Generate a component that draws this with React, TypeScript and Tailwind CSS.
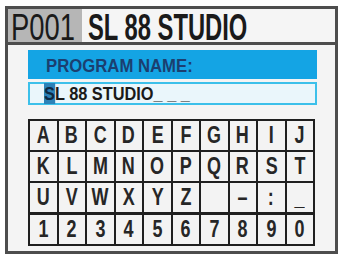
import React from "react";

const rows1 = [
  ["A", "B", "C", "D", "E", "F", "G", "H", "I", "J"],
  ["K", "L", "M", "N", "O", "P", "Q", "R", "S", "T"],
  ["U", "V", "W", "X", "Y", "Z", "", "–", ":", "_"],
];
const rows2 = ["1", "2", "3", "4", "5", "6", "7", "8", "9", "0"];

function Cell({ ch }: { ch: string }) {
  return (
    <div className="bg-[#f3f3f3] flex items-center justify-center h-[29px]">
      <span className="inline-block scale-x-[0.78] text-[23px] font-bold text-[#262626] leading-[29px]">
        {ch}
      </span>
    </div>
  );
}

export default function App() {
  return (
    <div
      className="w-[340px] h-[257px] bg-white pt-[6px] pl-[5px]"
      style={{ fontFamily: '"Liberation Sans", Arial, sans-serif' }}
    >
      <div className="w-[333px] h-[248px] border-[3px] border-[#4d4d4d] flex flex-col bg-[#f4f4f4]">
        {/* header */}
        <div className="flex h-[36px] border-b-[3px] border-[#4d4d4d] shrink-0">
          <div className="w-[74px] bg-[#b6b6b6] flex items-center pl-[3px]">
            <span className="inline-block origin-left scale-x-[0.74] text-[37px] leading-[36px] text-[#1a1a1a] whitespace-nowrap mt-[4px]">
              P001
            </span>
          </div>
          <div className="flex-1 bg-[#f5f5f5] flex items-center pl-[6px]">
            <span className="inline-block origin-left scale-x-[0.66] text-[36px] font-bold leading-[36px] text-[#1a1a1a] whitespace-nowrap mt-[4px]">
              SL 88 STUDIO
            </span>
          </div>
        </div>
        {/* body */}
        <div className="flex-1 pl-[20px] pr-[18px] pt-[5px]">
          <div className="h-[29px] bg-[#14a4e4] flex items-center pl-[18px]">
            <span className="inline-block origin-left scale-x-[0.88] text-[19px] font-bold leading-[29px] text-[#1b3f70] whitespace-nowrap mt-[1px]">
              PROGRAM NAME:
            </span>
          </div>
          <div className="mt-[3px] h-[23px] border-2 border-[#3cc0ea] bg-[#eaf6fb] flex items-center pl-[14px]">
            <span className="inline-block origin-left scale-x-[0.86] text-[19px] font-bold leading-[19px] text-[#1a1a1a] whitespace-nowrap">
              <span className="bg-[#2c82b8] text-[#0e2a44]">S</span>L 88 STUDIO_ _ _
            </span>
          </div>
          <div className="mt-[14px] w-[287px] bg-[#1f1f1f] p-[2px] flex flex-col gap-[3px]">
            <div className="grid grid-cols-10 gap-[2px]">
              {rows1.flat().map((c, i) => (
                <Cell key={i} ch={c} />
              ))}
            </div>
            <div className="grid grid-cols-10 gap-[2px]">
              {rows2.map((c, i) => (
                <Cell key={i} ch={c} />
              ))}
            </div>
          </div>
        </div>
      </div>
    </div>
  );
}
